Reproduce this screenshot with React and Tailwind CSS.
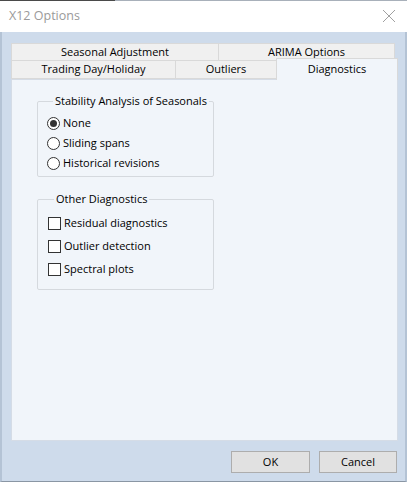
import React from "react";

const font = { fontFamily: '"Open Sans", "Noto Sans", sans-serif' };

function Radio({ checked, label }) {
  return (
    <label className="flex items-center h-[20px] gap-[3px]">
      <span className="w-[13px] h-[13px] rounded-full border border-[#333333] bg-white flex items-center justify-center">
        {checked && <span className="w-[7px] h-[7px] rounded-full bg-[#333333]" />}
      </span>
      <span>{label}</span>
    </label>
  );
}

function Check({ label }) {
  return (
    <label className="flex items-center h-[23px] gap-[3px]">
      <span className="w-[13px] h-[13px] border border-[#333333] bg-white" />
      <span>{label}</span>
    </label>
  );
}

function Tab({ label, className }) {
  return (
    <div
      className={
        "flex items-center justify-center bg-[#f0f0f0] border border-[#d9d9d9] -ml-px first:ml-0 " +
        className
      }
    >
      {label}
    </div>
  );
}

export default function App() {
  return (
    <div className="w-[407px] h-[482px] flex flex-col text-[11px] text-black" style={font}>
      {/* Top edge */}
      <div className="h-px flex">
        <div className="w-[115px] bg-[#4a4a4a]" />
        <div className="flex-1 bg-[#a8b0ba]" />
      </div>

      {/* Title bar */}
      <div className="h-[31px] bg-white flex items-center justify-between pl-[9px] pr-[11px]">
        <span className="text-[12.5px] text-[#9a9a9a]">X12 Options</span>
        <svg width="14" height="14" viewBox="0 0 14 14" className="mb-px">
          <path d="M1 1 L13 13 M13 1 L1 13" stroke="#a0a0a0" strokeWidth="1" fill="none" />
        </svg>
      </div>

      {/* Body */}
      <div className="flex-1 flex flex-col bg-[#cedbeb] border-l-2 border-l-[#b4c3d5] border-r-2 border-r-[#b4c3d5] border-b border-b-[#8a96a4] pl-[9px] pt-[11px]">
        {/* Tab rows */}
        <div className="flex h-[17px]">
          <Tab label="Seasonal Adjustment" className="w-[208px] border-b-0" />
          <Tab label="ARIMA Options" className="w-[177px] border-b-0" />
        </div>
        <div className="flex h-[19px]">
          <Tab label="Trading Day/Holiday" className="w-[165px]" />
          <Tab label="Outliers" className="w-[102px]" />
          <div className="relative z-10 -ml-px -mt-[2px] h-[22px] w-[122px] flex items-start justify-center pt-[2px] bg-[#f1f5fa] border border-[#d9d9d9] border-b-0">
            Diagnostics
          </div>
        </div>

        {/* Tab page */}
        <div className="w-[387px] h-[362px] bg-[#f1f5fa] border border-[#d5dce6] pt-[14px] pl-[25px]">
          <fieldset className="w-[177px] border border-[#d5d9de] rounded-[2px] pl-[9px] pt-[5px] pb-[3px]">
            <legend className="ml-[6px] px-[2px] leading-[14px]">Stability Analysis of Seasonals</legend>
            <Radio checked label="None" />
            <Radio label="Sliding spans" />
            <Radio label="Historical revisions" />
          </fieldset>

          <fieldset className="mt-[15px] w-[177px] border border-[#d5d9de] rounded-[2px] pl-[10px] pt-[6px] pb-[8px]">
            <legend className="ml-[6px] px-[2px] leading-[14px]">Other Diagnostics</legend>
            <Check label="Residual diagnostics" />
            <Check label="Outlier detection" />
            <Check label="Spectral plots" />
          </fieldset>
        </div>

        {/* Buttons */}
        <div className="flex justify-end gap-[9px] mt-[10px] pr-[8px]">
          <button className="w-[79px] h-[22px] bg-[#e1e1e1] border border-[#adadad]">OK</button>
          <button className="w-[78px] h-[22px] bg-[#e1e1e1] border border-[#adadad]">Cancel</button>
        </div>
      </div>
    </div>
  );
}
